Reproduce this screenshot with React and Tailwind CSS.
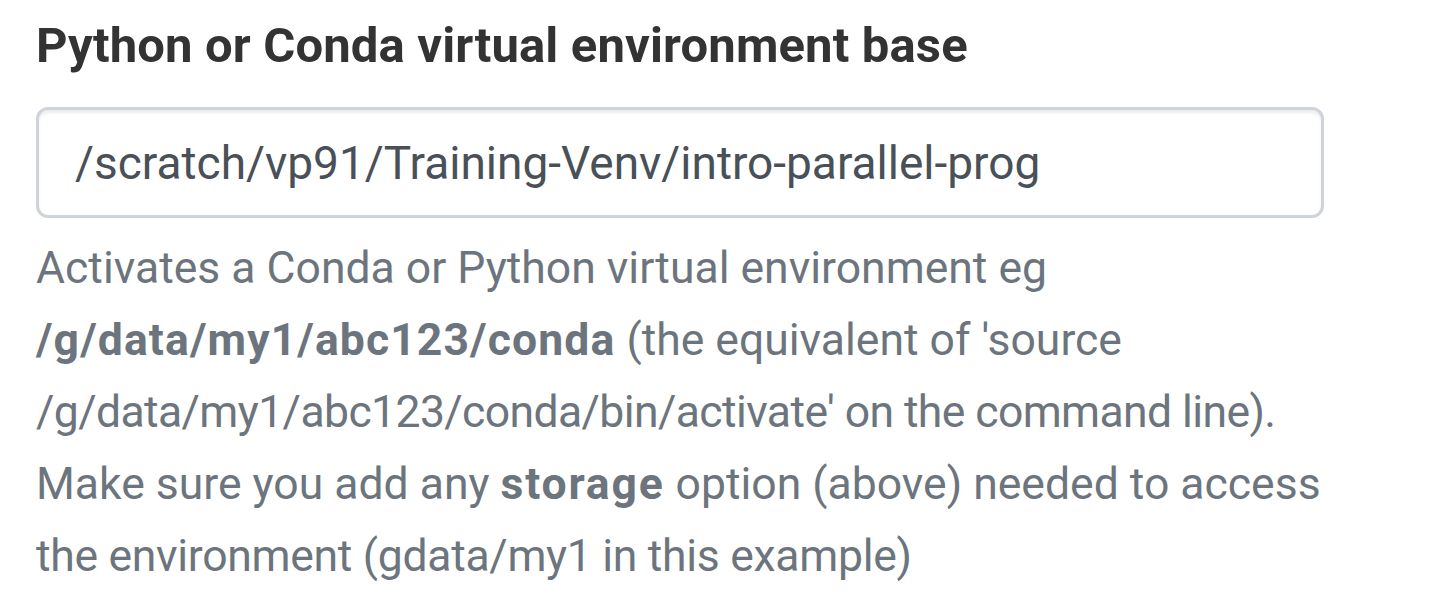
export default function App() {
  return (
    <div className="w-[1432px] h-[610px] bg-white px-[36px] pt-[18px]" style={{ fontFamily: 'Roboto, "Liberation Sans", sans-serif' }}>
      <label className="block text-[49px] leading-[56px] font-bold text-[#333333] tracking-[0.15px]">
        Python or Conda virtual environment base
      </label>
      <div className="mt-[33px] w-[1288px] h-[111px] rounded-[12px] border-[3px] border-[#ced4da] shadow-[inset_0_3px_3px_rgba(0,0,0,0.075)] flex items-center pl-[36px] pt-[2px] text-[46px] text-[#495057]">
        /scratch/vp91/Training-Venv/intro-parallel-prog
      </div>
      <div className="mt-[14px] text-[44.5px] leading-[72px] text-[#6c757d]">
        <div className="whitespace-nowrap">Activates a Conda or Python virtual environment eg</div>
        <div className="whitespace-nowrap"><b className="font-bold tracking-[1.1px]">/g/data/my1/abc123/conda</b> (the equivalent of 'source</div>
        <div className="whitespace-nowrap tracking-[-0.6px]">/g/data/my1/abc123/conda/bin/activate' on the command line).</div>
        <div className="whitespace-nowrap">Make sure you add any <b className="font-bold tracking-[1.8px]">storage</b> option (above) needed to access</div>
        <div className="whitespace-nowrap tracking-[-0.3px]">the environment (gdata/my1 in this example)</div>
      </div>
    </div>
  );
}
